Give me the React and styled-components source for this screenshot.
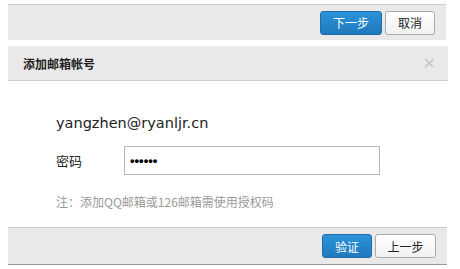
import React from 'react'
import styled, { createGlobalStyle } from 'styled-components'

const GlobalStyle = createGlobalStyle`
  body {
    margin: 0;
    background: #fff;
    font-family: Tahoma, "DejaVu Sans", "Noto Sans CJK SC", sans-serif;
  }
`

const Page = styled.div`
  width: 460px;
  height: 269px;
  padding: 4px 12px 0 8px;
  box-sizing: border-box;
`

const Bar = styled.div`
  display: flex;
  justify-content: flex-end;
  align-items: center;
  gap: 3px;
  background: #e9e9e9;
  border-top: 1px solid #ccc;
  height: 36px;
  box-sizing: border-box;
  padding-right: ${p => p.$pr || 11}px;
  width: ${p => p.$w || 438}px;
  ${p => p.$bottom && 'border-bottom: 1px solid #999; height: 38px;'}
`

const Button = styled.button`
  height: 24px;
  width: ${p => p.$w}px;
  padding: 0;
  border-radius: 3px;
  font-size: 12px;
  font-family: "Noto Sans CJK SC", sans-serif;
  cursor: pointer;
  border: 1px solid ${p => (p.$primary ? '#1f6ea8' : '#aaa')};
  background: ${p => (p.$primary ? 'linear-gradient(#2a93d9, #2079bd)' : 'linear-gradient(#fff, #f1f1f1)')};
  color: ${p => (p.$primary ? '#fff' : '#222')};
`

const Header = styled.div`
  margin-top: 6px;
  height: 35px;
  width: 440px;
  box-sizing: border-box;
  background: #e9e9e9;
  border-bottom: 1px solid #ccc;
  display: flex;
  align-items: center;
  justify-content: space-between;
  padding: 0 12px 0 15px;
`

const Title = styled.span`
  font-size: 12px;
  font-weight: bold;
  color: #222;
  font-family: "Noto Sans CJK SC", sans-serif;
`

const Close = styled.span`
  color: #c8c8c8;
  font-size: 16px;
  font-family: "DejaVu Sans", sans-serif;
`

const Body = styled.div`
  padding: 32px 0 0 48px;
  height: 146px;
  box-sizing: border-box;
`

const Email = styled.div`
  font-size: 14.5px;
  color: #222;
  height: 20px;
  line-height: 20px;
`

const Row = styled.div`
  display: flex;
  align-items: center;
  margin-top: 13px;
`

const Label = styled.span`
  width: 68px;
  font-size: 13px;
  color: #222;
  font-family: "Noto Sans CJK SC", sans-serif;
`

const Input = styled.input`
  width: 256px;
  height: 29px;
  box-sizing: border-box;
  border: 1px solid #b5b5b5;
  padding: 0 5px;
  font-size: 13px;
  font-weight: bold;
  outline: none;
  caret-color: #000;
`

const Note = styled.div`
  margin-top: 18px;
  font-size: 12px;
  color: #999;
  font-family: "Noto Sans CJK SC", sans-serif;
`

export default function App() {
  return (
    <Page>
      <GlobalStyle />
      <Bar>
        <Button $primary $w={62}>下一步</Button>
        <Button $w={50}>取消</Button>
      </Bar>
      <Header>
        <Title>添加邮箱帐号</Title>
        <Close>✕</Close>
      </Header>
      <Body>
        <Email>yangzhen@ryanljr.cn</Email>
        <Row>
          <Label>密码</Label>
          <Input type="password" defaultValue="123456" autoFocus />
        </Row>
        <Note>注：添加QQ邮箱或126邮箱需使用授权码</Note>
      </Body>
      <Bar $bottom $w={439}>
        <Button $primary $w={50}>验证</Button>
        <Button $w={61}>上一步</Button>
      </Bar>
    </Page>
  )
}
